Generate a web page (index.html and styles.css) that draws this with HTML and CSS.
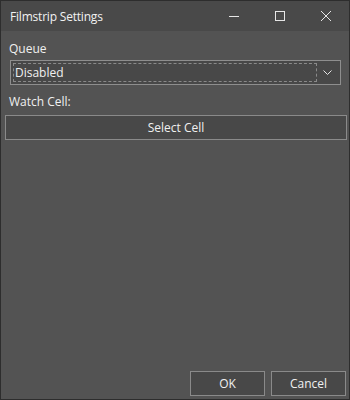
FILE: index.html
```html
<!DOCTYPE html>
<html>
<head>
<meta charset="utf-8">
<title>Filmstrip Settings</title>
<link rel="stylesheet" href="styles.css">
</head>
<body>
  <div class="window">
    <div class="titlebar">
      <span class="title">Filmstrip Settings</span>
      <div class="caption-buttons">
        <span class="caption-btn">
          <svg width="10" height="10" viewBox="0 0 10 10"><path d="M0 5.5H10" stroke="#e6e6e6" stroke-width="1"/></svg>
        </span>
        <span class="caption-btn">
          <svg width="10" height="10" viewBox="0 0 10 10"><rect x="0.5" y="0.5" width="9" height="9" fill="none" stroke="#e6e6e6" stroke-width="1"/></svg>
        </span>
        <span class="caption-btn">
          <svg width="10" height="10" viewBox="0 0 10 10"><path d="M0 0L10 10M10 0L0 10" stroke="#e6e6e6" stroke-width="1"/></svg>
        </span>
      </div>
    </div>

    <div class="content">
      <div class="label">Queue</div>
      <div class="combo">
        <div class="combo-value">Disabled</div>
        <div class="combo-arrow">
          <svg width="9" height="5" viewBox="0 0 9 5"><path d="M0.5 0.5L4.5 4.5L8.5 0.5" fill="none" stroke="#e6e6e6" stroke-width="1"/></svg>
        </div>
      </div>

      <div class="label watch">Watch Cell:</div>
      <button class="btn wide">Select Cell</button>

      <div class="spacer"></div>

      <div class="footer">
        <button class="btn dlg">OK</button>
        <button class="btn dlg">Cancel</button>
      </div>
    </div>
  </div>
</body>
</html>
```

FILE: styles.css
```css
html, body {
  margin: 0;
  padding: 0;
}

body {
  width: 350px;
  height: 400px;
  font-family: "Open Sans", "Noto Sans", sans-serif;
  font-size: 12px;
  color: #f0f0f0;
  background-color: #2b2b2b;
}

.window {
  box-sizing: border-box;
  width: 350px;
  height: 400px;
  border: 1px solid #2d2d2d;
  display: flex;
  flex-direction: column;
  background-color: #535353;
}

.titlebar {
  height: 30px;
  background-color: #494949;
  display: flex;
  align-items: center;
  justify-content: space-between;
  padding-left: 9px;
}

.title {
  font-size: 12px;
  letter-spacing: -0.2px;
  color: #f2f2f2;
}

.caption-buttons {
  display: flex;
  height: 100%;
}

.caption-btn {
  width: 46px;
  height: 100%;
  display: flex;
  align-items: center;
  justify-content: center;
}

.content {
  flex: 1;
  display: flex;
  flex-direction: column;
  padding: 7px 3px 3px 3px;
}

.label {
  padding-left: 5px;
  height: 22px;
  line-height: 22px;
}

.combo {
  margin: 0 5px 0 6px;
  height: 25px;
  box-sizing: border-box;
  border: 1px solid #8e8e8e;
  background-color: #484848;
  display: flex;
  align-items: center;
  padding: 2px;
}

.combo-value {
  flex: 1;
  height: 19px;
  line-height: 18px;
  border: 1px dashed #8a8a8a;
  box-sizing: border-box;
  padding-left: 1px;
}

.combo-arrow {
  width: 21px;
  display: flex;
  justify-content: center;
  align-items: center;
}

.watch {
  margin-top: 6px;
}

.btn {
  font-family: inherit;
  font-size: 12px;
  color: #f0f0f0;
  background-color: #484848;
  border: 1px solid #8a8a8a;
  box-sizing: border-box;
  height: 25px;
  padding: 0;
}

.wide {
  margin: 2px 0 0 1px;
  width: 342px;
}

.spacer {
  flex: 1;
}

.footer {
  display: flex;
  justify-content: flex-end;
  gap: 6px;
}

.dlg {
  width: 75px;
}
```
